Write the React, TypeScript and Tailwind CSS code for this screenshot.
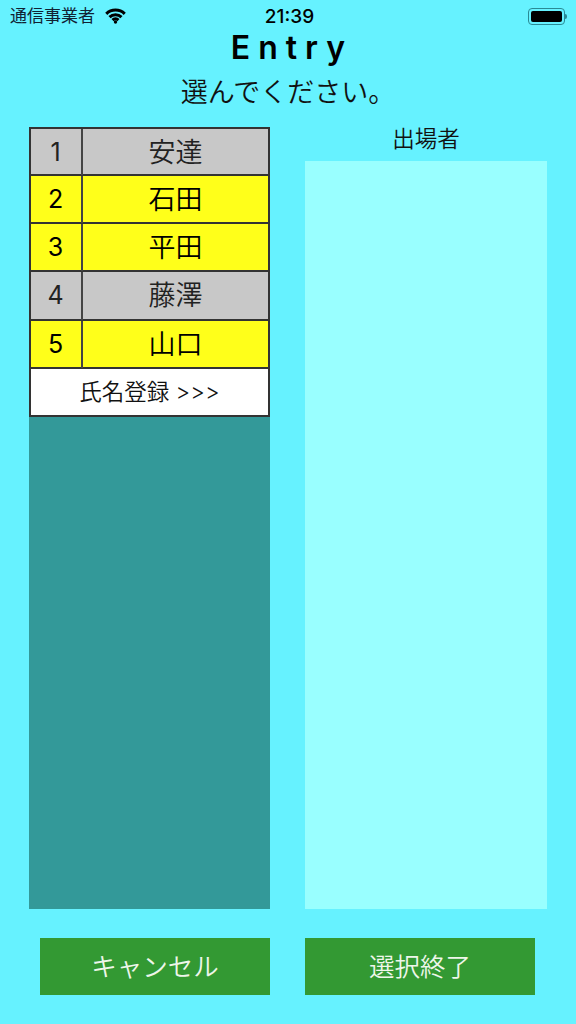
const jp = "font-['Inter','Noto_Sans_CJK_JP',sans-serif]"

const players = [
  { no: 1, name: '安達', active: false },
  { no: 2, name: '石田', active: true },
  { no: 3, name: '平田', active: true },
  { no: 4, name: '藤澤', active: false },
  { no: 5, name: '山口', active: true },
]

function Wifi() {
  return (
    <svg width="21" height="16" viewBox="0 0 20 15" fill="none" stroke="#000" strokeWidth="2.9">
      <path d="M1.2 5.4a12.6 12.6 0 0 1 17.6 0" />
      <path d="M4.3 8.6a8.2 8.2 0 0 1 11.4 0" />
      <path d="M7.2 11.4a4 4 0 0 1 5.6 0" />
      <circle cx="10" cy="13.2" r="1.6" fill="#000" stroke="none" />
    </svg>
  )
}

function Battery() {
  return (
    <div className="flex items-center">
      <div className="w-[37px] h-[17px] rounded-[4px] border border-[#2a8a95] p-[2px]">
        <div className="w-full h-full rounded-[2px] bg-black" />
      </div>
      <div className="w-[2px] h-[5px] rounded-r-sm bg-[#2a8a95]" />
    </div>
  )
}

export default function App() {
  return (
    <div className={`w-[576px] h-[1024px] bg-[#66f2ff] flex flex-col overflow-hidden text-black ${jp}`}>
      <div className="h-[32px] grid grid-cols-3 items-center pl-[10px] pr-[9px]">
        <div className="flex items-center gap-[10px]">
          <span className="text-[17px] leading-none text-[#123] whitespace-nowrap">通信事業者</span>
          <Wifi />
        </div>
        <div className="text-center pl-[2px] text-[19px] font-medium leading-none">21:39</div>
        <div className="flex justify-end">
          <Battery />
        </div>
      </div>

      <h1 className="h-[32px] flex items-center justify-center text-[32px] font-semibold leading-none tracking-[0.25em] pl-[8px]">Entry</h1>
      <p className="mt-[10px] h-[36px] flex items-center justify-center text-[27px] font-[350] leading-none text-[#111]">選んでください。</p>

      <div className="mt-[17px] flex gap-[35px] pl-[29px]">
        <div className="w-[241px] h-[782px] bg-[#339999]">
          <div className="border-x-2 border-[#333]">
            {players.map((p, i) => (
              <div
                key={p.no}
                className={`flex items-center border-t-2 border-[#333] text-[27px] font-[350] leading-none ${i === 0 ? 'h-[48px]' : 'h-[49.2px] -mt-px'} ${p.active ? 'bg-[#ffff1a] text-black' : 'bg-[#c8c8c8] text-[#222]'}`}
              >
                <div className="w-[52px] h-full pr-px flex items-center justify-center border-r-2 border-[#444] text-[25px] font-normal">{p.no}</div>
                <div className="flex-1 text-center">{p.name}</div>
              </div>
            ))}
            <div className="h-[50px] flex items-center justify-center bg-white border-y-2 border-[#333] text-[22.5px] font-[350] leading-none text-[#111] -mt-px">氏名登録 &gt;&gt;&gt;</div>
          </div>
        </div>

        <div className="w-[242px] flex flex-col">
          <div className="h-[34px] pb-[10px] flex items-center justify-center text-[22.5px] font-[350] leading-none text-[#111]">出場者</div>
          <div className="flex-1 bg-[#99ffff]" />
        </div>
      </div>

      <div className="mt-[29px] flex gap-[35px] pl-[40px]">
        <button className="w-[230px] h-[57px] bg-[#339933] text-[25.5px] font-[350] leading-none text-[#eef6ea]">キャンセル</button>
        <button className="w-[230px] h-[57px] bg-[#339933] text-[25.5px] font-[350] leading-none text-[#eef6ea]">選択終了</button>
      </div>
    </div>
  )
}
